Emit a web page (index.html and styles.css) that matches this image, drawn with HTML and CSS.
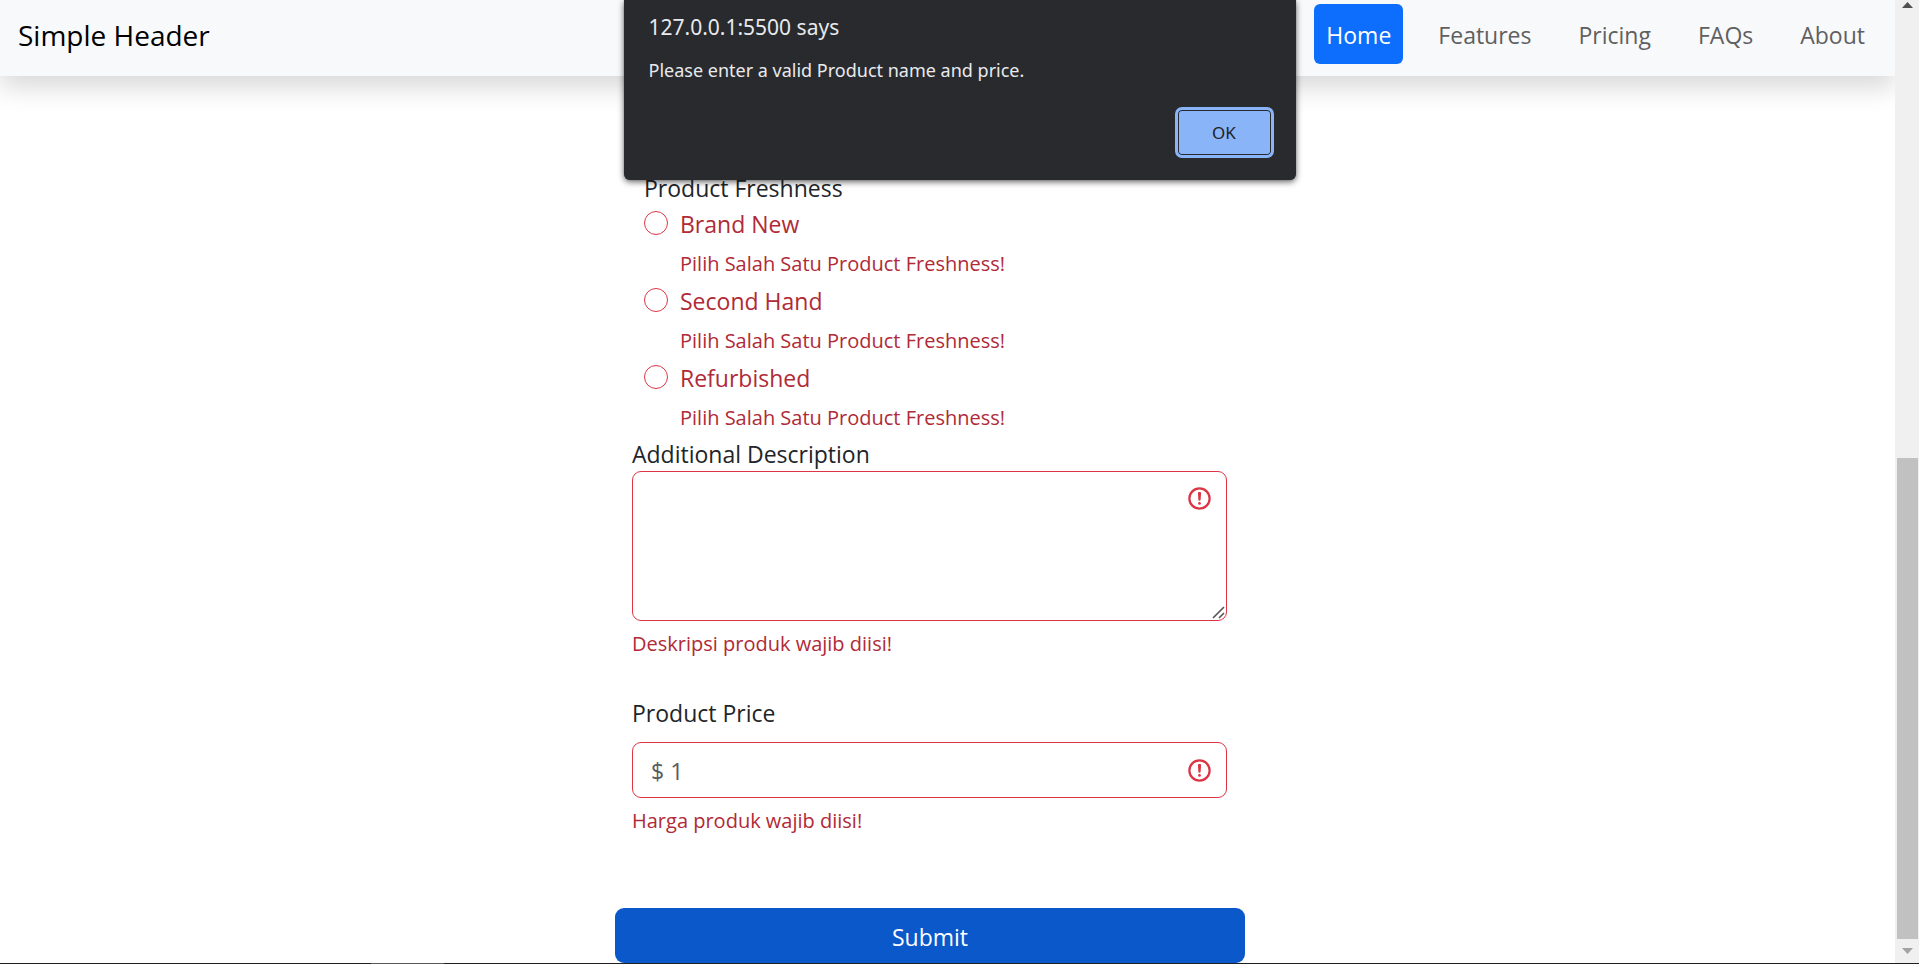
FILE: index.html
```html
<!DOCTYPE html>
<html lang="en">
<head>
<meta charset="utf-8">
<title>Product form</title>
<link rel="stylesheet" href="styles.css">
</head>
<body>
<div class="window">
  <div class="page">
    <header class="header">
      <a class="brand" href="#">Simple Header</a>
      <nav class="nav">
        <a class="nav-link active" href="#">Home</a>
        <a class="nav-link" href="#">Features</a>
        <a class="nav-link" href="#">Pricing</a>
        <a class="nav-link" href="#">FAQs</a>
        <a class="nav-link" href="#">About</a>
      </nav>
    </header>
    <main class="main">
      <form class="form" novalidate>
        <fieldset class="group">
          <legend class="legend">Product Freshness</legend>
          <div class="check">
            <input class="radio" type="radio" name="freshness" id="brand-new">
            <label class="check-label" for="brand-new">Brand New</label>
            <p class="feedback">Pilih Salah Satu Product Freshness!</p>
          </div>
          <div class="check">
            <input class="radio" type="radio" name="freshness" id="second-hand">
            <label class="check-label" for="second-hand">Second Hand</label>
            <p class="feedback">Pilih Salah Satu Product Freshness!</p>
          </div>
          <div class="check">
            <input class="radio" type="radio" name="freshness" id="refurbished">
            <label class="check-label" for="refurbished">Refurbished</label>
            <p class="feedback">Pilih Salah Satu Product Freshness!</p>
          </div>
        </fieldset>
        <div class="field">
          <label class="label-tight" for="description">Additional Description</label>
          <div class="control">
            <textarea class="input textarea" id="description"></textarea>
            <svg class="alert-icon top" viewBox="0 0 12 12" fill="none" stroke="#dc3545"><circle cx="6" cy="6" r="4.5"/><path stroke-linejoin="round" d="M5.8 3.6h.4L6 6.5z"/><circle cx="6" cy="8.2" r=".6" fill="#dc3545" stroke="none"/></svg>
            <svg class="grip" viewBox="0 0 13 13" fill="none" stroke="#555" stroke-width="1.6"><path d="M1 12 12 1M7 12l5-5"/></svg>
          </div>
          <p class="feedback">Deskripsi produk wajib diisi!</p>
        </div>
        <div class="field price">
          <label class="label" for="price">Product Price</label>
          <div class="control">
            <input class="input" type="text" id="price" placeholder="$ 1">
            <svg class="alert-icon middle" viewBox="0 0 12 12" fill="none" stroke="#dc3545"><circle cx="6" cy="6" r="4.5"/><path stroke-linejoin="round" d="M5.8 3.6h.4L6 6.5z"/><circle cx="6" cy="8.2" r=".6" fill="#dc3545" stroke="none"/></svg>
          </div>
          <p class="feedback">Harga produk wajib diisi!</p>
        </div>
        <button class="submit" type="button">Submit</button>
      </form>
    </main>
  </div>
  <div class="scrollbar">
    <div class="scroll-arrow"><svg width="11" height="6" viewBox="0 0 11 6"><path fill="#505050" d="M5.500 0 11 6H0z"/></svg></div>
    <div class="track"><div class="thumb"></div></div>
    <div class="scroll-arrow down"><svg width="11" height="6" viewBox="0 0 11 6"><path fill="#a3a3a3" d="M0 0h11L5.500 6z"/></svg></div>
  </div>
</div>
<div class="taskbar"><div class="taskbar-item"></div></div>
<div class="dialog" role="alertdialog" aria-labelledby="dialog-title" aria-describedby="dialog-message">
  <h2 class="dialog-title" id="dialog-title">127.0.0.1:5500 says</h2>
  <p class="dialog-message" id="dialog-message">Please enter a valid Product name and price.</p>
  <button class="ok" type="button">OK</button>
</div>
</body>
</html>
```
FILE: styles.css
```css
* {
  box-sizing: border-box;
}

body {
  margin: 0;
  min-height: 100vh;
  display: flex;
  flex-direction: column;
  background: #fff;
  color: #212529;
  font-family: "Open Sans", "Noto Sans", sans-serif;
  font-size: 23px;
  line-height: 36px;
}

p,
h2 {
  margin: 0;
}

.window {
  flex: 1;
  display: flex;
}

.page {
  flex: 1;
  min-width: 0;
}

/* Header */
.header {
  display: flex;
  align-items: center;
  justify-content: space-between;
  padding: 4px 18px 12px;
  background: #f8f9fa;
  box-shadow: 0 12px 24px rgba(0, 0, 0, 0.15);
}

.brand {
  padding-top: 2px;
  color: #000;
  font-size: 28px;
  text-decoration: none;
}

.nav {
  display: flex;
  gap: 23px;
}

.nav-link {
  padding: 13px 12px 11px;
  border-radius: 6px;
  color: #5f6061;
  text-decoration: none;
}

.nav-link.active {
  background: #0d6efd;
  color: #fff;
}

/* Form */
.main {
  display: flex;
  justify-content: center;
  padding: 94px 59px 0 24px;
}

.form {
  width: 630px;
  max-width: 100%;
}

.group {
  margin: 0;
  padding: 0 29px 1px;
  border: 0;
}

.legend {
  padding: 0;
}

.check {
  display: grid;
  grid-template-columns: 24px 1fr;
  column-gap: 12px;
  padding-bottom: 3px;
}

.check .feedback {
  grid-column: 2;
  margin-top: 6px;
}

.radio {
  appearance: none;
  width: 24px;
  height: 24px;
  margin: 5px 0 0;
  border: 1px solid #dc3545;
  border-radius: 50%;
  background: #fff;
}

.check-label {
  color: #b02a37;
}

.feedback {
  margin-top: 7px;
  color: #b02a37;
  font-size: 20px;
  line-height: 32px;
}

.field {
  padding: 0 18px 0 17px;
}

.label-tight {
  display: block;
  line-height: 33px;
}

.label {
  display: block;
  margin-bottom: 11px;
}

.price {
  margin-top: 35px;
}

.control {
  position: relative;
}

.input {
  display: block;
  width: 100%;
  height: 56px;
  padding: 10px 54px 8px 18px;
  border: 1px solid #dc3545;
  border-radius: 9px;
  background: #fff;
  color: #212529;
  font: inherit;
}

.input::placeholder {
  color: #595c5f;
  opacity: 1;
}

.textarea {
  height: 150px;
  resize: none;
}

.alert-icon {
  position: absolute;
  right: 14px;
  width: 27px;
  height: 27px;
}

.alert-icon.top {
  top: 14px;
}

.alert-icon.middle {
  top: 15px;
}

.grip {
  position: absolute;
  right: 2px;
  bottom: 2px;
  width: 13px;
  height: 13px;
}

.submit {
  display: block;
  width: 100%;
  height: 55px;
  margin-top: 71px;
  padding: 2px 0 0;
  border: 0;
  border-radius: 9px;
  background: #0a58ca;
  color: #fff;
  font: inherit;
}

/* Scrollbar */
.scrollbar {
  display: flex;
  flex-direction: column;
  width: 24px;
  padding: 0 1px 0 2px;
  background: #f0f0f0;
}

.scroll-arrow {
  display: flex;
  justify-content: center;
  align-items: flex-start;
  height: 24px;
  padding-top: 2px;
}

.scroll-arrow.down {
  padding-top: 9px;
}

.track {
  flex: 1;
  display: grid;
  grid-template-rows: 434fr 481fr;
}

.thumb {
  grid-row: 2;
  background: #c1c1c1;
}

.taskbar {
  height: 1px;
  padding-left: 371px;
  background: #1f1f20;
}

.taskbar-item {
  width: 73px;
  height: 1px;
  background: #5a5a5b;
}

/* Alert dialog */
.dialog {
  position: absolute;
  top: 0;
  left: 50%;
  width: 672px;
  transform: translateX(-50%);
  display: flex;
  flex-direction: column;
  padding: 10px 22px 22px 25px;
  border-radius: 0 0 6px 6px;
  background: #292a2d;
  box-shadow: 0 2px 6px rgba(0, 0, 0, 0.6), 0 0 1px #888;
  color: #e8eaed;
  font-family: "Noto Sans", "Open Sans", sans-serif;
}

.dialog-title {
  font-size: 21px;
  font-weight: 400;
  line-height: 34px;
}

.dialog-message {
  margin-top: 10px;
  font-size: 18px;
  line-height: 32px;
}

.ok {
  align-self: flex-end;
  width: 99px;
  height: 51px;
  margin-top: 21px;
  border: 3px solid #8ab4f8;
  border-radius: 7px;
  background: #8ab4f8;
  box-shadow: inset 0 0 0 1px #292a2d;
  color: #202124;
  font: inherit;
  font-size: 17px;
}
```
